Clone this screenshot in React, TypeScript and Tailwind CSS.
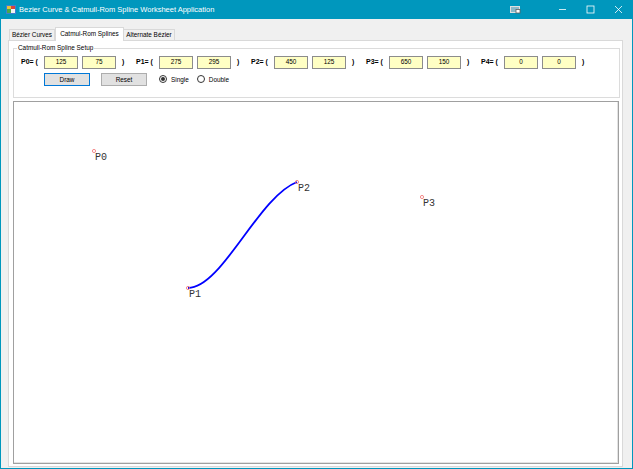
import React from "react";

const points = [
  { name: "P0", x: 80, y: 49 },
  { name: "P1", x: 174, y: 186 },
  { name: "P2", x: 283, y: 80 },
  { name: "P3", x: 408, y: 95 },
];

const coords = [
  { label: "P0", x: "125", y: "75" },
  { label: "P1", x: "275", y: "295" },
  { label: "P2", x: "450", y: "125" },
  { label: "P3", x: "650", y: "150" },
  { label: "P4", x: "0", y: "0" },
];

function TitleBar() {
  return (
    <div className="flex h-[19px] items-center bg-[#0097bd] text-white">
      <svg className="ml-[6px] h-[9px] w-[10px]" viewBox="0 0 10 9">
        <rect x="0" y="0" width="10" height="9" fill="#3f7fd0" />
        <rect x="1" y="1" width="4" height="3" fill="#e8c23a" />
        <rect x="5" y="1" width="4" height="3" fill="#d9443a" />
        <rect x="1" y="4" width="4" height="4" fill="#4aa84a" />
        <rect x="5" y="4" width="4" height="4" fill="#f2f2f2" />
      </svg>
      <span className="ml-[3px] text-[7.5px] leading-none">
        Bezier Curve &amp; Catmull-Rom Spline Worksheet Application
      </span>
      <div className="ml-auto flex items-center">
        <svg className="h-[8px] w-[11px]" viewBox="0 0 11 8">
          <rect x="0.5" y="0.5" width="9" height="6" fill="#8ab9c9" stroke="#e0e0e0" />
          <rect x="6" y="3.5" width="4" height="3.5" fill="#ffffff" stroke="#606060" strokeWidth="0.8" />
        </svg>
        <svg className="ml-[37px] h-[9px] w-[9px]" viewBox="0 0 9 9">
          <line x1="1" y1="4.5" x2="8" y2="4.5" stroke="white" strokeWidth="0.8" />
        </svg>
        <svg className="ml-[19px] h-[9px] w-[9px]" viewBox="0 0 9 9">
          <rect x="1" y="1" width="7" height="7" fill="none" stroke="white" strokeWidth="0.8" />
        </svg>
        <svg className="ml-[19px] mr-[10px] h-[9px] w-[9px]" viewBox="0 0 9 9">
          <path d="M1 1 L8 8 M8 1 L1 8" stroke="white" strokeWidth="0.8" />
        </svg>
      </div>
    </div>
  );
}

function Tabs() {
  return (
    <div className="flex h-[13px] items-end pl-[1px] text-[6.4px] text-black">
      <div className="flex h-[11px] w-[46px] items-center justify-center border border-b-0 border-[#d9d9d9] bg-[#f0f0f0]">
        Bézier Curves
      </div>
      <div className="relative z-10 -mb-px flex h-[14px] w-[69px] items-center justify-center border border-b-0 border-[#d9d9d9] bg-white pb-[1px]">
        Catmul-Rom Splines
      </div>
      <div className="flex h-[11px] w-[51px] items-center justify-center border border-b-0 border-l-0 border-[#d9d9d9] bg-[#f0f0f0]">
        Alternate Bézier
      </div>
    </div>
  );
}

function Field({ value }: { value: string }) {
  return (
    <div className="flex h-[13px] w-[34px] items-center justify-center border border-[#8c8c8c] bg-[#ffffc4] text-[6.4px] font-normal leading-none text-black">
      {value}
    </div>
  );
}

function Radio({ label, checked }: { label: string; checked?: boolean }) {
  return (
    <div className="flex items-center">
      <div className="flex h-[8px] w-[8px] items-center justify-center rounded-full border border-[#333]">
        {checked && <div className="h-[4px] w-[4px] rounded-full bg-[#333]" />}
      </div>
      <span className="ml-[4px] text-[6.4px] text-black">{label}</span>
    </div>
  );
}

function SetupGroup() {
  return (
    <div className="relative h-[50px] w-[607px] border border-[#dcdcdc]">
      <span className="absolute left-[3px] top-[-5px] bg-white px-[1px] text-[6.4px] leading-[8px] text-black">
        Catmull-Rom Spline Setup
      </span>
      <div className="flex pl-[7px] pt-[7px]">
        {coords.map((c) => (
          <div key={c.label} className="flex w-[115px] items-center text-[7px] font-bold text-black">
            <span className="w-[23px]">{c.label}= (</span>
            <Field value={c.x} />
            <div className="ml-[4px]">
              <Field value={c.y} />
            </div>
            <span className="ml-[6px]">)</span>
          </div>
        ))}
      </div>
      <div className="mt-[4px] flex items-center pl-[30px]">
        <div className="flex h-[13px] w-[46px] items-center justify-center border border-[#0078d7] bg-[#e1e1e1] text-[6.4px] text-black">
          Draw
        </div>
        <div className="ml-[11px] flex h-[13px] w-[46px] items-center justify-center border border-[#adadad] bg-[#e1e1e1] text-[6.4px] text-black">
          Reset
        </div>
        <div className="ml-[12px]">
          <Radio label="Single" checked />
        </div>
        <div className="ml-[8px]">
          <Radio label="Double" />
        </div>
      </div>
    </div>
  );
}

function Canvas() {
  const [p0, p1, p2, p3] = points;
  return (
    <div className="mt-[3px] h-[363px] w-[606px] border border-[#a0a0a0] bg-white shadow-[inset_-1px_-1px_0_#e3e3e3]">
      <svg width="604" height="361" className="block">
        <path
          d={`M${p1.x} ${p1.y} C 208 186, 244 95, ${p2.x} ${p2.y}`}
          fill="none"
          stroke="#0000ff"
          strokeWidth="1.8"
        />
        {[p0, p1, p2, p3].map((p) => (
          <g key={p.name}>
            <circle cx={p.x} cy={p.y} r="1.6" fill="none" stroke="#f07070" strokeWidth="0.8" />
            <text
              x={p.x + 1}
              y={p.y + 9}
              fontFamily="'Liberation Mono', monospace"
              fontSize="10"
              fill="#333"
            >
              {p.name}
            </text>
          </g>
        ))}
      </svg>
    </div>
  );
}

export default function App() {
  return (
    <div className="flex h-[469px] w-[633px] flex-col font-['Liberation_Sans',Arial,sans-serif]">
      <TitleBar />
      <div className="flex flex-1 flex-col border-x border-b border-[#0097bd] bg-[#f0f0f0] pb-[1px] pl-[7px] pr-[9px] pt-[8px]">
        <Tabs />
        <div className="flex-1 border border-[#d9d9d9] bg-white pl-[4px] pt-[7px]">
          <SetupGroup />
          <Canvas />
        </div>
      </div>
    </div>
  );
}
